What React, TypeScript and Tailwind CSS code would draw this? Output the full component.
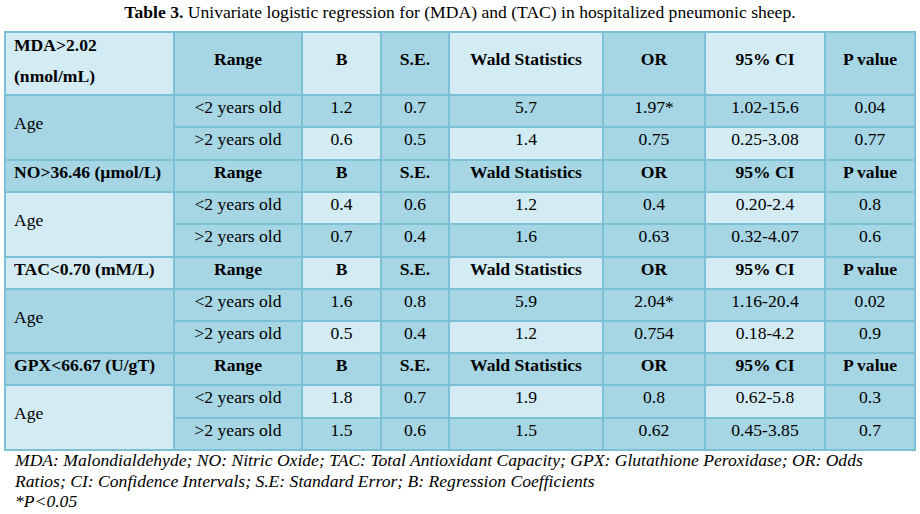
// Table 3 – univariate logistic regression (MDA, NO, TAC, GPX)
const DARK = 'bg-[#a6d5e3]'
const LIGHT = 'bg-[#d3ebf3]'

const heads = ['Range', 'B', 'S.E.', 'Wald Statistics', 'OR', '95% CI', 'P value']

const sections = [
  {
    label: ['MDA>2.02', '(nmol/mL)'],
    rows: [
      ['<2 years old', '1.2', '0.7', '5.7', '1.97*', '1.02-15.6', '0.04'],
      ['>2 years old', '0.6', '0.5', '1.4', '0.75', '0.25-3.08', '0.77'],
    ],
  },
  {
    label: ['NO>36.46 (µmol/L)'],
    rows: [
      ['<2 years old', '0.4', '0.6', '1.2', '0.4', '0.20-2.4', '0.8'],
      ['>2 years old', '0.7', '0.4', '1.6', '0.63', '0.32-4.07', '0.6'],
    ],
  },
  {
    label: ['TAC<0.70 (mM/L)'],
    rows: [
      ['<2 years old', '1.6', '0.8', '5.9', '2.04*', '1.16-20.4', '0.02'],
      ['>2 years old', '0.5', '0.4', '1.2', '0.754', '0.18-4.2', '0.9'],
    ],
  },
  {
    label: ['GPX<66.67 (U/gT)'],
    rows: [
      ['<2 years old', '1.8', '0.7', '1.9', '0.8', '0.62-5.8', '0.3'],
      ['>2 years old', '1.5', '0.6', '1.5', '0.62', '0.45-3.85', '0.7'],
    ],
  },
]

// odd rows are fully dark, even rows alternate by column
const shade = (row: number, col: number) => (row % 2 === 1 || col % 2 === 1 ? DARK : LIGHT)

export default function App() {
  const cells: React.ReactNode[] = []

  sections.forEach((sec, s) => {
    const hr = s * 3
    // header row
    cells.push(
      sec.label.length > 1 ? (
        <div key={`l${s}`} className={`${shade(hr, 0)} pl-[8px] pt-[2px] font-bold leading-[20px]`}>
          <div>{sec.label[0]}</div>
          <div className="mt-[11px]">{sec.label[1]}</div>
        </div>
      ) : (
        <div key={`l${s}`} className={`${shade(hr, 0)} flex items-center pl-[8px] pb-[9px] font-bold leading-[20px]`}>
          {sec.label[0]}
        </div>
      )
    )
    heads.forEach((h, i) => {
      cells.push(
        <div
          key={`h${s}-${i}`}
          className={`${shade(hr, i + 1)} flex items-center justify-center font-bold leading-[20px] ${s === 0 ? 'pb-[10px]' : 'pb-[9px]'}`}
        >
          {h}
        </div>
      )
    })
    // age cell spanning both data rows
    cells.push(
      <div key={`a${s}`} className={`${shade(hr + 1, 0)} row-span-2 flex items-center pl-[8px] pb-[9px] leading-[20px]`}>
        Age
      </div>
    )
    sec.rows.forEach((r, ri) => {
      r.forEach((v, ci) => {
        cells.push(
          <div
            key={`d${s}-${ri}-${ci}`}
            className={`${shade(hr + 1 + ri, ci + 1)} flex items-center justify-center pb-[9px] leading-[20px]`}
          >
            {v}
          </div>
        )
      })
    })
  })

  return (
    <div className="w-[920px] h-[514px] overflow-hidden bg-white px-[4px] text-[17.6px] text-black font-[family-name:Liberation_Serif,Times_New_Roman,serif]">
      <div className="h-[31px] pt-[2px] text-center leading-[20px] whitespace-nowrap">
        <span className="font-bold">Table 3.</span> Univariate logistic regression for (MDA) and (TAC) in hospitalized pneumonic sheep.
      </div>

      <div className="grid w-[912px] grid-cols-[167px_126px_77px_66px_152px_100px_118px_88px] grid-rows-[61px_30px_31px_30px_30px_31px_30px_30px_30px_30px_31px_30px] gap-[2px] bg-[#7bc0d4] p-[2px] whitespace-nowrap">
        {cells}
      </div>

      <div className="pl-[11px] italic leading-[21px] -mt-[1px] whitespace-nowrap">
        <div>MDA: Malondialdehyde; NO: Nitric Oxide; TAC: Total Antioxidant Capacity; GPX: Glutathione Peroxidase; OR: Odds</div>
        <div>Ratios; CI: Confidence Intervals; S.E: Standard Error; B: Regression Coefficients</div>
        <div className="leading-[18px]">*P&lt;0.05</div>
      </div>
    </div>
  )
}
